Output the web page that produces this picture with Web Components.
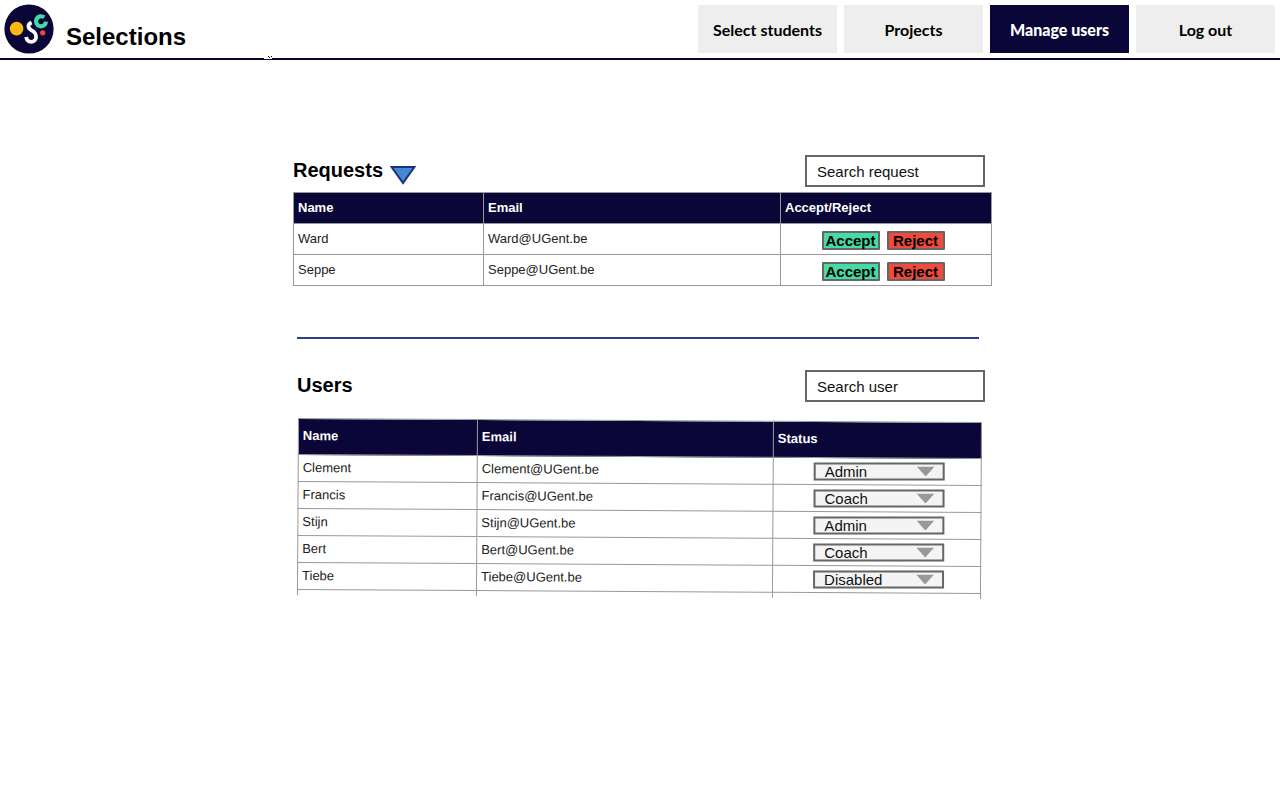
<!DOCTYPE html>
<html lang="en">
<head>
<meta charset="utf-8">
<meta name="viewport" content="width=device-width, initial-scale=1">
<title>Selections - Manage users</title>
<style>
  body {
    margin: 0;
    background: #fff;
    color: #000;
    font-family: "Liberation Sans", Arial, sans-serif;
    --navy: #0a0637;
    --line: #999;
    --edge: #666;
    --green: #44dba4;
    --red: #f14a3b;
  }
  main {
    box-sizing: border-box;
    max-width: 706px;
    margin: 0 auto;
    padding: 95px 0 40px 6px;
  }
</style>
</head>
<body>
<site-header title-text="Selections">
  <nav-link slot="nav" href="#students">Select students</nav-link>
  <nav-link slot="nav" href="#projects">Projects</nav-link>
  <nav-link slot="nav" href="#users" current>Manage users</nav-link>
  <nav-link slot="nav" href="#logout">Log out</nav-link>
</site-header>
<main>
  <section-bar>
    Requests
    <sort-toggle slot="action"></sort-toggle>
    <search-box slot="search" label="Search request"></search-box>
  </section-bar>
  <request-table></request-table>
  <section-divider></section-divider>
  <section-bar inset>
    Users
    <search-box slot="search" label="Search user"></search-box>
  </section-bar>
  <user-table></user-table>
</main>

<script>
class BaseElement extends HTMLElement {
  constructor() {
    super();
    this.attachShadow({ mode: "open" });
  }
  connectedCallback() {
    this.shadowRoot.innerHTML = this.render();
  }
}

customElements.define("osoc-logo", class extends BaseElement {
  render() {
    return `
      <style>
        :host { display: block; width: 50px; height: 50px; }
        svg { display: block; }
      </style>
      <svg width="50" height="50" viewBox="0 0 50 50" role="img" aria-label="Logo">
        <circle cx="25" cy="25" r="24.6" fill="#0a0637"/>
        <circle cx="12.6" cy="24.6" r="6.8" fill="#fcb70f"/>
        <circle cx="38.7" cy="28.8" r="2.6" fill="#f14a3b"/>
        <path d="M42 17.6 A5 5 0 1 1 40.2 13.4" fill="none" stroke="#44dba4" stroke-width="4.2"/>
        <path d="M27.6 18.4 C23.2 20.2 23.6 24.2 27.6 26.4 C33.6 29.2 33.6 37.6 27.4 37.8 C24.4 37.8 22.6 35.8 22.2 33" fill="none" stroke="#fff" stroke-width="3.8"/>
      </svg>`;
  }
});

customElements.define("site-header", class extends BaseElement {
  render() {
    return `
      <style>
        :host { display: block; position: relative; border-bottom: 2px solid var(--navy); }
        header { display: flex; justify-content: space-between; align-items: center; gap: 16px; height: 58px; padding: 0 5px 0 4px; }
        .brand { display: flex; align-items: center; gap: 12px; }
        h1 { margin: 0; padding-top: 16px; font-size: 24px; line-height: 28px; }
        nav { display: flex; gap: 7px; }
        .notch { position: absolute; left: 264px; bottom: -1px; }
      </style>
      <header>
        <div class="brand"><osoc-logo></osoc-logo><h1>${this.getAttribute("title-text")}</h1></div>
        <nav><slot name="nav"></slot></nav>
      </header>
      <svg class="notch" width="8" height="3" viewBox="0 0 8 3" aria-hidden="true">
        <path d="M0 0H8V3H0Z" fill="#fff"/><path d="M4 0H5V1H4ZM5 1H6V2H5ZM7 0H8V1H7Z" fill="#000"/>
      </svg>`;
  }
});

customElements.define("nav-link", class extends BaseElement {
  render() {
    const current = this.hasAttribute("current");
    return `
      <style>
        :host { display: block; }
        a {
          display: grid; place-items: center; box-sizing: border-box; width: 139px; height: 48px; padding-top: 2px;
          background: #eee; color: #000; text-decoration: none;
          font-family: Lato, sans-serif; font-size: 16px; font-weight: 700; line-height: 20px; white-space: nowrap;
        }
        :host([current]) a { background: var(--navy); color: #fff; font-weight: 900; }
      </style>
      <a href="${this.getAttribute("href")}"${current ? ' aria-current="page"' : ""}><slot></slot></a>`;
  }
});

customElements.define("section-bar", class extends BaseElement {
  render() {
    return `
      <style>
        :host { display: flex; justify-content: space-between; align-items: center; padding-right: 8px; }
        :host([inset]) { padding-left: 4px; }
        .title { display: flex; align-items: center; gap: 7px; }
        h2 { margin: 0; padding-bottom: 2px; font-size: 20px; line-height: 24px; }
      </style>
      <div class="title"><h2><slot></slot></h2><slot name="action"></slot></div>
      <slot name="search"></slot>`;
  }
});

customElements.define("sort-toggle", class extends BaseElement {
  render() {
    return `
      <style>
        :host { display: block; padding-top: 8px; }
        button { display: block; margin: 0; padding: 0; border: 0; background: none; cursor: pointer; }
        svg { display: block; }
      </style>
      <button type="button" aria-label="Toggle requests">
        <svg width="26" height="20" viewBox="0 0 26 20">
          <path d="M1.6 2 H24.4 L13 18 Z" fill="#4489d2" stroke="#1d2f7f" stroke-width="2"/>
        </svg>
      </button>`;
  }
});

customElements.define("search-box", class extends BaseElement {
  render() {
    const label = this.getAttribute("label");
    return `
      <style>
        :host { display: block; }
        input {
          display: block; box-sizing: border-box; width: 180px; height: 32px; margin: 0;
          padding: 0 10px; border: 2px solid var(--edge); border-radius: 0;
          background: #fff; color: #000; font-family: inherit; font-size: 15px;
        }
        input::placeholder { color: #111; opacity: 1; }
      </style>
      <input type="search" aria-label="${label}" placeholder="${label}">`;
  }
});

customElements.define("section-divider", class extends BaseElement {
  render() {
    return `
      <style>
        :host { display: block; padding: 51px 14px 31px 4px; }
        hr { margin: 0; border: 0; border-top: 2px solid #2b3f8c; }
      </style>
      <hr>`;
  }
});

customElements.define("action-button", class extends BaseElement {
  render() {
    return `
      <style>
        :host { display: block; }
        button {
          display: grid; place-items: center; box-sizing: border-box; width: 58px; height: 19px;
          margin: 0; padding: 0; border: 2px solid var(--edge); border-radius: 1px; background: var(--green);
          color: #000; font-family: inherit; font-size: 15px; font-weight: 700; line-height: 16px;
        }
        :host([kind="reject"]) button { background: var(--red); }
      </style>
      <button type="button"><slot></slot></button>`;
  }
});

customElements.define("request-table", class extends BaseElement {
  render() {
    const rows = ["Ward", "Seppe"].map(name => `
      <tr><td>${name}</td><td>${name}@UGent.be</td>
        <td><div class="actions"><action-button kind="accept">Accept</action-button><action-button kind="reject">Reject</action-button></div></td></tr>`).join("");
    return `
      <style>
        :host { display: block; padding: 5px 1px 0 0; }
        table { width: 100%; border-collapse: collapse; table-layout: fixed; font-size: 13px; line-height: 16px; }
        th, td { box-sizing: border-box; padding: 0 4px; border: 1px solid var(--line); text-align: left; vertical-align: middle; }
        th { height: 31px; background: var(--navy); color: #fff; }
        td { height: 31px; color: #222; }
        .name-col { width: 190px; }
        .action-col { width: 211px; }
        .actions { display: flex; justify-content: center; gap: 7px; padding: 3px 6px 0 0; }
      </style>
      <table>
        <colgroup><col class="name-col"><col><col class="action-col"></colgroup>
        <thead><tr><th scope="col">Name</th><th scope="col">Email</th><th scope="col">Accept/Reject</th></tr></thead>
        <tbody>${rows}</tbody>
      </table>`;
  }
});

customElements.define("status-select", class extends BaseElement {
  render() {
    const value = this.getAttribute("value");
    const options = ["Admin", "Coach", "Disabled"]
      .map(o => `<option${o === value ? " selected" : ""}>${o}</option>`).join("");
    return `
      <style>
        :host { display: grid; grid-template-columns: 131px; align-items: center; }
        select {
          grid-area: 1 / 1; appearance: none; box-sizing: border-box; width: 100%; height: 18px;
          margin: 0; padding: 0 9px; border: 2px solid var(--edge); border-radius: 0;
          background: #f4f4f4; color: #111; font-family: inherit; font-size: 15px; line-height: 16px;
        }
        svg { grid-area: 1 / 1; justify-self: end; margin-right: 9px; pointer-events: none; z-index: 1; }
      </style>
      <select aria-label="Status of ${this.getAttribute("user")}">${options}</select>
      <svg width="20" height="10" viewBox="0 0 20 10"><path d="M1 0 H19 L10 10 Z" fill="#999"/></svg>`;
  }
});

customElements.define("user-table", class extends BaseElement {
  render() {
    const users = [["Clement", "Admin"], ["Francis", "Coach"], ["Stijn", "Admin"], ["Bert", "Coach"], ["Tiebe", "Disabled"]];
    const rows = users.map(([name, status]) => `
      <tr><td>${name}</td><td>${name}@UGent.be</td>
        <td><div class="status"><status-select user="${name}" value="${status}"></status-select></div></td></tr>`).join("");
    return `
      <style>
        :host { display: block; padding: 16px 11px 0 5px; }
        table {
          width: 100%; border-collapse: collapse; table-layout: fixed; font-size: 13px; line-height: 16px;
          transform: rotate(0.34deg); transform-origin: 0 0;
        }
        th, td { box-sizing: border-box; padding: 0 4px; border: 1px solid var(--line); text-align: left; vertical-align: middle; }
        th { height: 36px; padding-bottom: 2px; background: var(--navy); color: #fff; }
        td { height: 27px; color: #222; }
        .name-col { width: 179px; }
        .status-col { width: 208px; }
        .status { display: flex; justify-content: center; padding-left: 4px; }
        status-select { transform: rotate(-0.34deg); }
        tfoot td { height: 5px; border-bottom: 0; }
      </style>
      <table>
        <colgroup><col class="name-col"><col><col class="status-col"></colgroup>
        <thead><tr><th scope="col">Name</th><th scope="col">Email</th><th scope="col">Status</th></tr></thead>
        <tbody>${rows}</tbody>
        <tfoot aria-hidden="true"><tr><td></td><td></td><td></td></tr></tfoot>
      </table>`;
  }
});
</script>
</body>
</html>
